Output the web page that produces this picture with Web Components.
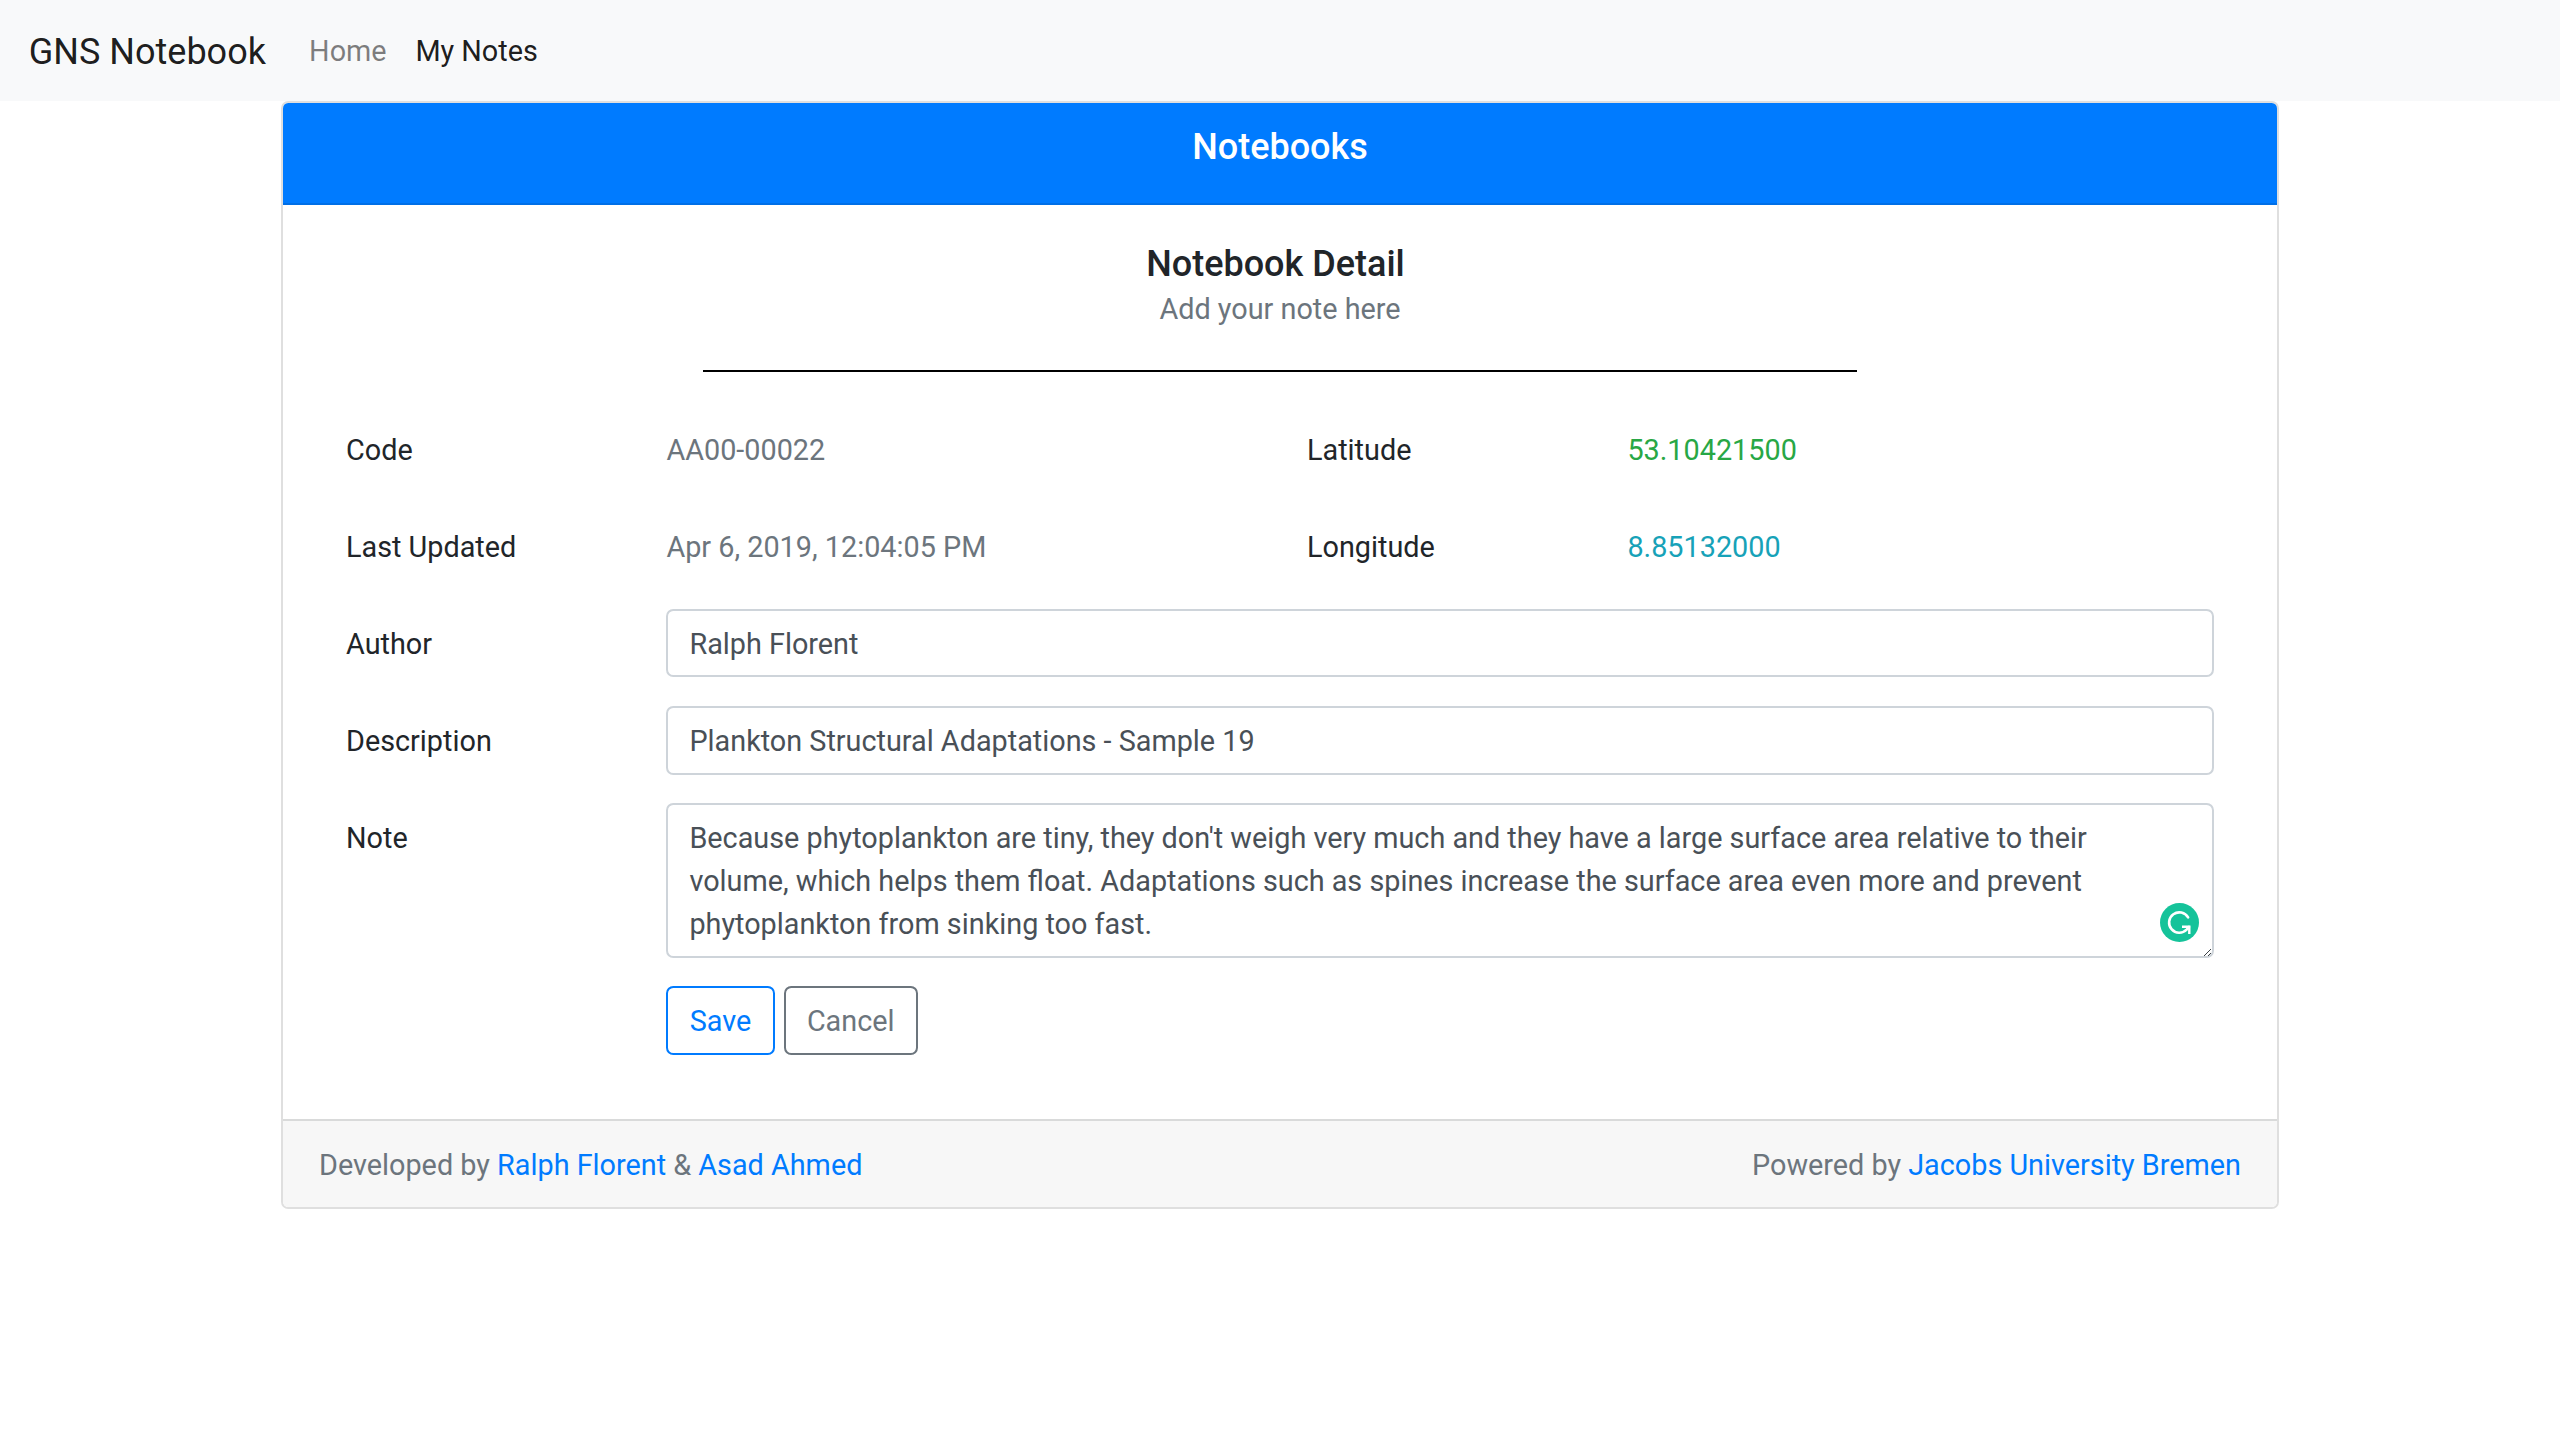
<!DOCTYPE html>
<html lang="en">
<head>
<meta charset="utf-8">
<title>GNS Notebook</title>
<style>
  html { font-size: 28.8px; }
  body { margin: 0; background: #fff; color: #212529; font: 400 1rem/1.5 Roboto, "Liberation Sans", sans-serif; }
</style>
</head>
<body>
<notebook-app></notebook-app>
<script>
const define = (name, html) => customElements.define(name, class extends HTMLElement {
  constructor() {
    super();
    const t = document.createElement('template');
    t.innerHTML = html;
    this.attachShadow({ mode: 'open' }).append(t.content.cloneNode(true));
  }
});

define('nav-bar', `
  <style>
    :host { display: flex; align-items: center; box-sizing: border-box; height: 101px; padding: 1.8px 28.8px 0; background: #f8f9fa; }
    .brand { margin-right: 28.8px; padding-top: 1.4px; font-size: 36px; color: rgba(0,0,0,.9); white-space: nowrap; }
    nav { display: flex; }
  </style>
  <div class="brand"><slot name="brand"></slot></div><nav><slot></slot></nav>`);

define('nav-link', `
  <style>
    :host { display: block; padding: 0 14.4px; color: rgba(0,0,0,.5); }
    :host([active]) { color: rgba(0,0,0,.9); }
  </style><slot></slot>`);

define('note-card', `
  <style>
    :host { display: flex; flex-direction: column; box-sizing: border-box; width: 1998px; height: 1108px; margin: 0 auto; border: 2px solid #dfdfdf; border-radius: 7.2px; background: #fff; overflow: hidden; }
    header { box-sizing: border-box; height: 102px; padding-top: 22.9px; border-bottom: 2px solid #006fe7; background: #007bff; color: #fff; text-align: center; font-size: 36px; font-weight: 500; line-height: 43.2px; }
    main { flex: 1; padding: 36px 36px 0; }
    footer { display: flex; justify-content: space-between; box-sizing: border-box; height: 88px; padding: 22.9px 36px 0; border-top: 2px solid #d9dada; background: #f7f7f7; color: #6c757d; }
  </style>
  <header><slot name="header"></slot></header>
  <main><slot></slot></main>
  <footer><slot name="left"></slot><slot name="right"></slot></footer>`);

define('detail-heading', `
  <style>
    :host { display: block; box-sizing: border-box; height: 174px; padding-top: 1.9px; text-align: center; }
    h5 { margin: 0 0 1.7px; padding-right: 9px; font-size: 36px; font-weight: 500; line-height: 43.2px; }
    p { margin: 0; color: #6c757d; }
    hr { width: 60%; height: 2px; margin: 39.1px auto 0; border: 0; background: #000; }
  </style>
  <h5><slot name="title"></slot></h5><p><slot></slot></p><hr>`);

define('form-row', `
  <style>
    :host { display: flex; margin-bottom: 28.8px; }
    label, .value { box-sizing: border-box; padding: 0 27px; }
    label { flex: 0 0 320.4px; height: 68.4px; padding-top: 13.9px; }
    .value { flex: 1; min-width: 0; }
  </style>
  <label><slot name="label"></slot></label><div class="value"><slot></slot></div>`);

define('row-pair', `
  <style>
    :host { display: grid; grid-template-columns: 1fr 1fr; margin-bottom: -.4px; }
  </style><slot></slot>`);

define('static-value', `
  <style>
    :host { display: block; box-sizing: border-box; height: 68.4px; padding-top: 13.9px; color: #6c757d; }
    :host([tone=green]) { color: #28a745; }
    :host([tone=teal]) { color: #17a2b8; }
  </style><slot></slot>`);

define('text-field', `
  <style>
    :host { display: block; position: relative; box-sizing: border-box; height: 68.4px; padding: 11.9px 21px 0; border: 2px solid #ced4da; border-radius: 7.2px; color: #495057; }
    :host([multiline]) { height: 154.8px; padding-top: 11.5px; }
    .tools { display: none; }
    :host([multiline]) .tools { display: block; }
    .badge { position: absolute; right: 13.4px; bottom: 14.2px; }
    .grip { position: absolute; right: .4px; bottom: .2px; }
    svg { display: block; }
  </style>
  <slot></slot>
  <div class="tools">
    <svg class="badge" width="39" height="39" viewBox="0 0 39 39">
      <circle cx="19.5" cy="19.5" r="19.5" fill="#15c39a"/>
      <path d="M28.1 14.4A10.2 10.2 0 1 0 26.6 26.7L29 23.9" fill="none" stroke="#fff" stroke-width="2.6" stroke-linecap="round"/>
      <path d="M23.2 23.7H29.3V29.8" fill="none" stroke="#fff" stroke-width="2.4" stroke-linecap="square"/>
    </svg>
    <svg class="grip" width="8" height="8" viewBox="0 0 8 8" shape-rendering="crispEdges">
      <path fill="#3c4146" d="M0 7h1v1h-1zM1 6h1v1h-1zM2 5h1v1h-1zM3 4h1v1h-1zM4 3h1v1h-1zM5 2h1v1h-1zM6 1h1v1h-1zM4 7h1v1h-1zM5 6h1v1h-1zM6 5h1v1h-1z"/>
    </svg>
  </div>`);

define('outline-button', `
  <style>
    :host { display: block; box-sizing: border-box; height: 69px; padding: 11.7px 21.3px 0; border: 2px solid #007bff; border-radius: 7.2px; color: #007bff; }
    :host([secondary]) { border-color: #6c757d; color: #6c757d; }
  </style><slot></slot>`);

define('button-group', `
  <style>
    :host { display: flex; gap: 9px; margin-top: -.8px; }
  </style><slot></slot>`);

define('notebook-app', `
  <style>
    :host { display: block; }
    a { color: #007bff; text-decoration: none; }
  </style>
  <nav-bar><span slot="brand">GNS Notebook</span><nav-link>Home</nav-link><nav-link active>My Notes</nav-link></nav-bar>
  <note-card>
    <span slot="header">Notebooks</span>
    <detail-heading><span slot="title">Notebook Detail</span>Add your note here</detail-heading>
    <row-pair>
      <form-row><span slot="label">Code</span><static-value>AA00-00022</static-value></form-row>
      <form-row><span slot="label">Latitude</span><static-value tone="green">53.10421500</static-value></form-row>
      <form-row><span slot="label">Last Updated</span><static-value>Apr 6, 2019, 12:04:05 PM</static-value></form-row>
      <form-row><span slot="label">Longitude</span><static-value tone="teal">8.85132000</static-value></form-row>
    </row-pair>
    <form-row><span slot="label">Author</span><text-field>Ralph Florent</text-field></form-row>
    <form-row><span slot="label">Description</span><text-field>Plankton Structural Adaptations - Sample 19</text-field></form-row>
    <form-row><span slot="label">Note</span><text-field multiline>Because phytoplankton are tiny, they don't weigh very much and they have a large surface area relative to their volume, which helps them float. Adaptations such as spines increase the surface area even more and prevent phytoplankton from sinking too fast.</text-field></form-row>
    <form-row><button-group><outline-button>Save</outline-button><outline-button secondary>Cancel</outline-button></button-group></form-row>
    <span slot="left">Developed by <a href="#">Ralph Florent</a> &amp; <a href="#">Asad Ahmed</a></span>
    <span slot="right">Powered by <a href="#">Jacobs University Bremen</a></span>
  </note-card>`);
</script>
</body>
</html>
